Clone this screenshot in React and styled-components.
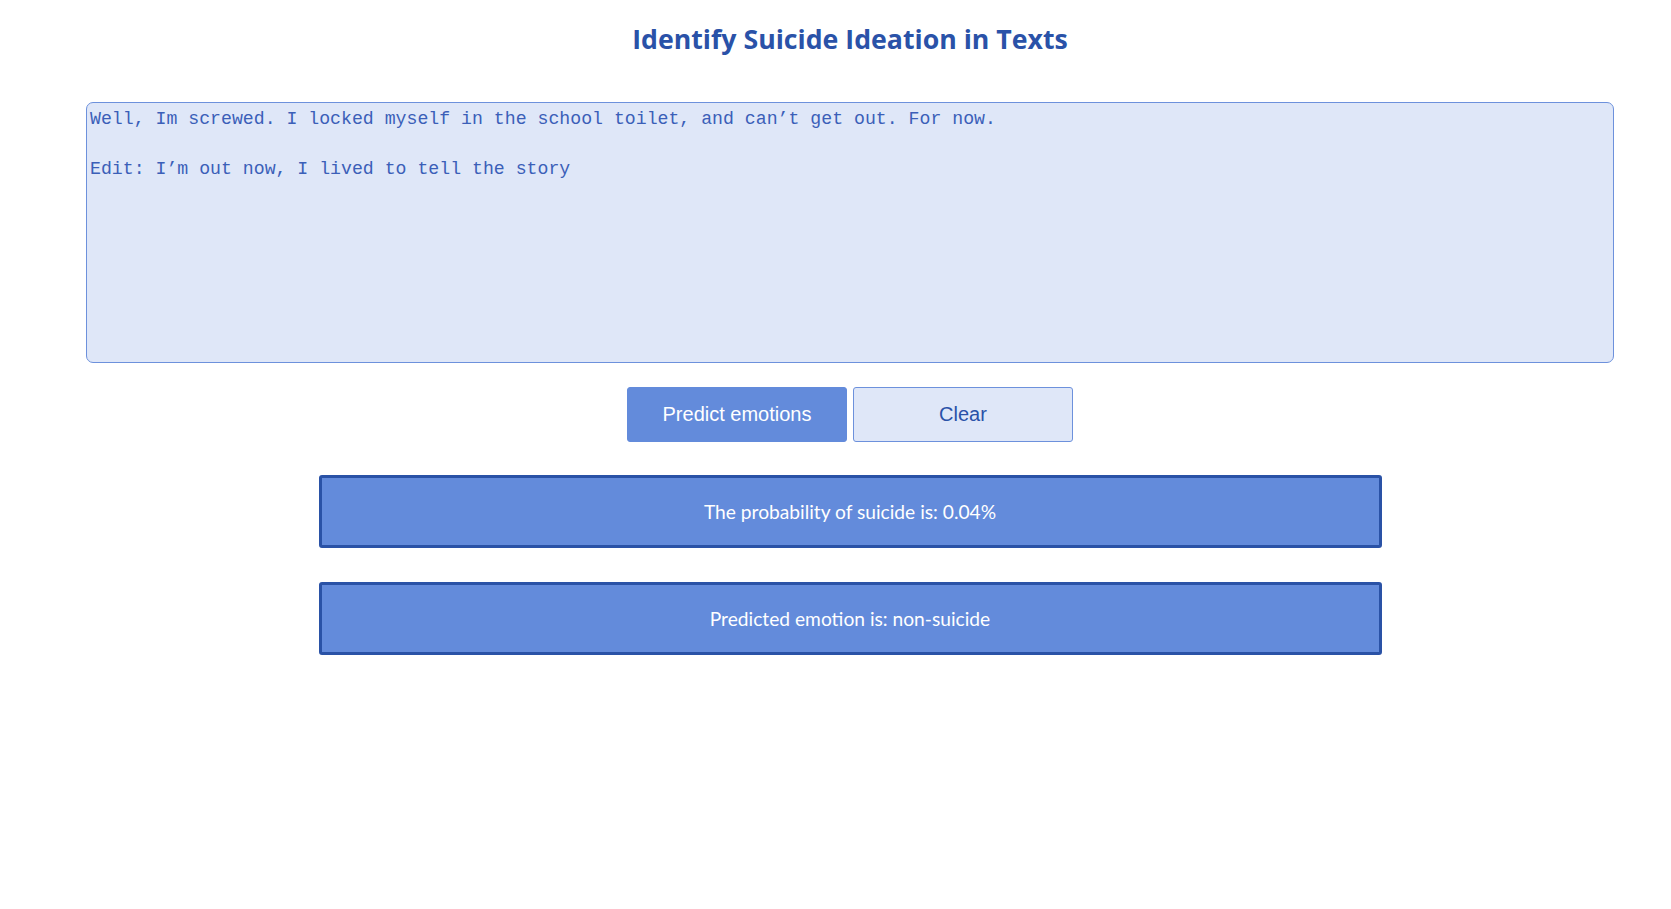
import React, { useState } from "react";
import styled, { createGlobalStyle } from "styled-components";

const Global = createGlobalStyle`
  html, body { margin: 0; padding: 0; background: #ffffff; overflow: hidden; }
  * { box-sizing: border-box; }
`;

const Page = styled.main`
  width: 1700px;
  display: flex;
  flex-direction: column;
  align-items: center;
  padding-top: 19px;
`;

const Title = styled.h1`
  margin: 0;
  height: 40px;
  line-height: 40px;
  font-family: "Open Sans", "Noto Sans", sans-serif;
  font-weight: 700;
  font-size: 26.7px;
  color: #2a52a8;
  text-align: center;
`;

const TextArea = styled.textarea`
  margin-top: 43px;
  width: 1528px;
  height: 261px;
  padding: 4px 3px;
  background: #dfe7f8;
  border: 1px solid #6d91dc;
  border-radius: 7px;
  color: #3b5fb8;
  font-family: "Liberation Mono", "DejaVu Sans Mono", monospace;
  font-size: 18.2px;
  line-height: 25px;
  resize: none;
  outline: none;
`;

const ButtonRow = styled.div`
  margin-top: 24px;
  display: flex;
  gap: 6px;
`;

const Button = styled.button`
  width: 220px;
  height: 55px;
  border-radius: 3px;
  font-family: "Liberation Sans", Arial, sans-serif;
  font-size: 20px;
  cursor: pointer;
  background: ${(p) => (p.$primary ? "#638bdb" : "#dfe7f8")};
  color: ${(p) => (p.$primary ? "#ffffff" : "#2a52a8")};
  border: 1px solid ${(p) => (p.$primary ? "#638bdb" : "#6d91dc")};
`;

const Result = styled.div`
  margin-top: ${(p) => p.$gap}px;
  width: 1063px;
  height: 73px;
  display: flex;
  align-items: center;
  justify-content: center;
  background: #638bdb;
  border: 3px solid #2a52a6;
  border-radius: 3px;
  color: #ffffff;
  font-family: "Lato", "Open Sans", sans-serif;
  font-size: 19.2px;
`;

export default function App() {
  const [text, setText] = useState(
    "Well, Im screwed. I locked myself in the school toilet, and can\u2019t get out. For now.\n\nEdit: I\u2019m out now, I lived to tell the story"
  );
  return (
    <>
      <Global />
      <Page>
        <Title>Identify Suicide Ideation in Texts</Title>
        <TextArea value={text} onChange={(e) => setText(e.target.value)} />
        <ButtonRow>
          <Button $primary>Predict emotions</Button>
          <Button onClick={() => setText("")}>Clear</Button>
        </ButtonRow>
        <Result $gap={33}>The probability of suicide is: 0.04%</Result>
        <Result $gap={34}>Predicted emotion is: non-suicide</Result>
      </Page>
    </>
  );
}
